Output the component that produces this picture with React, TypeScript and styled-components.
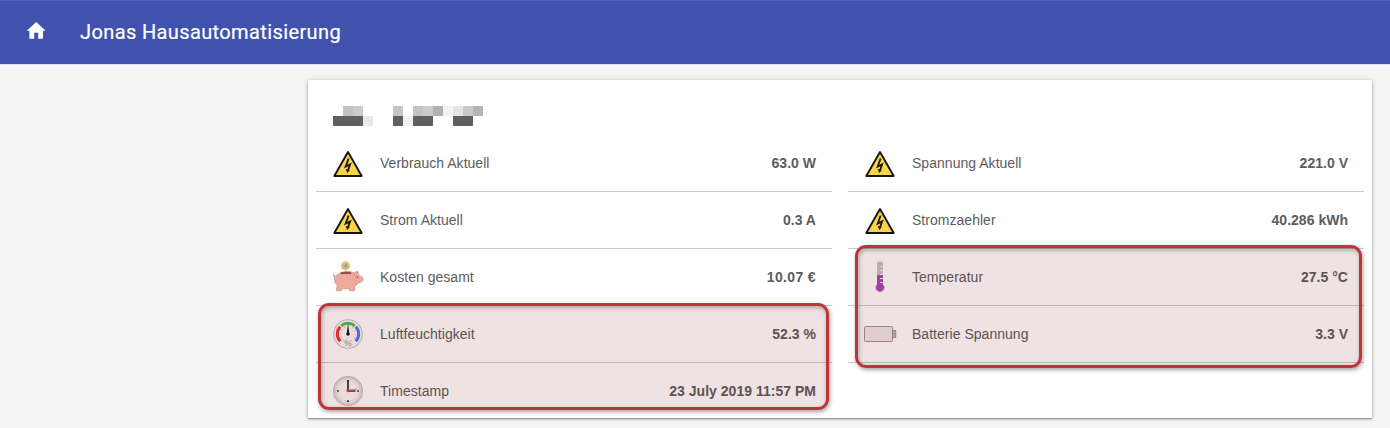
import React from 'react';
import styled, { createGlobalStyle } from 'styled-components';

const GlobalStyle = createGlobalStyle`
  * { box-sizing: border-box; }
  html, body { margin: 0; background: #f4f4f4; }
  body { height: 428px; overflow: hidden; font-family: "Liberation Sans", Arial, sans-serif; }
  svg { display: block; flex: none; }
`;

const Header = styled.header`
  display: flex;
  align-items: center;
  height: 64px;
  padding-left: 24px;
  background: #4152ae;
  border-top: 1px solid #5766b7;
  box-shadow: 0 1px 0 #dadeee;
  color: #fff;
`;

const Title = styled.h1`
  margin: 0 0 2px 32px;
  font: 400 20px/24px Roboto, sans-serif;
  letter-spacing: 0.38px;
  -webkit-text-stroke: 0.2px #fff;
`;

const Card = styled.main`
  position: relative;
  width: 1064px;
  height: 338px;
  margin: 16px 0 0 308px;
  padding: 16px 8px 0;
  background: #fff;
  border-radius: 1px;
  box-shadow: 0 1px 2px rgba(0, 0, 0, 0.45), 0 0 5px rgba(0, 0, 0, 0.14);
`;

const CardHeading = styled.div`
  height: 39px;
  padding: 10px 0 0 17px;
`;

const Columns = styled.div`
  display: grid;
  grid-template-columns: 516px 516px;
  column-gap: 16px;
  height: 283px;
  overflow: hidden;
`;

const Row = styled.div`
  display: flex;
  align-items: center;
  height: 57px;
  padding: 0 16px;
  border-bottom: 1px solid #cbcbcb;
  color: #5c5c5c;
  font-size: 14px;
  line-height: 20px;
  letter-spacing: 0.03px;
`;

const IconSlot = styled.div`
  width: 32px;
  height: 32px;
  margin-right: 16px;
`;

const Value = styled.strong<{ $tracking?: number }>`
  margin-left: auto;
  letter-spacing: ${(p) => p.$tracking ?? 0.02}px;
`;

const Highlight = styled.div<{ $left: number; $top: number; $width: number; $height: number }>`
  position: absolute;
  left: ${(p) => p.$left}px;
  top: ${(p) => p.$top}px;
  width: ${(p) => p.$width}px;
  height: ${(p) => p.$height}px;
  border: 3px solid #bc3537;
  border-radius: 11px;
  background: rgba(118, 14, 14, 0.12);
  box-shadow: 1px 2px 4px rgba(0, 0, 0, 0.36), inset 1px 2px 4px rgba(0, 0, 0, 0.28);
`;

const HomeIcon = () => (
  <svg width="24" height="24" viewBox="0 0 24 24" fill="#fff" transform="translate(0.2 -2.3)">
    <path d="M10 20v-6h4v6h4.800v-8h2.700L12 3.300 2.500 12h2.700v8z" />
  </svg>
);

const Voltage = () => (
  <svg width="32" height="32" viewBox="0 0 32 32">
    <path d="M16 5 29.700 29H2.300Z" fill="#f9d648" stroke="#151515" strokeWidth="1.900" strokeLinejoin="round" />
    <path d="m16.600 11.500-2.900 8 4.400-2.200-2.300 6.700" fill="none" stroke="#1d1a12" strokeWidth="1.900" />
    <path d="m13.700 22 1.500 4 2.600-3Z" fill="#1d1a12" />
  </svg>
);

const PiggyBank = () => (
  <svg width="32" height="32" viewBox="0 0 32 32">
    <circle cx="13.500" cy="4.800" r="4.600" fill="#efc66a" />
    <circle cx="13.500" cy="4.800" r="2.900" fill="#b4b3ae" />
    <path d="M13.800 3.200v3.200" stroke="#898989" />
    <path
      d="M1.500 13c-.6 1.500 0 2.600 1 3-.5 3.500.7 6.800 2.600 8.300l-.8 5.400h5l1-2.200c2 .5 4 .5 6.200 0l1 2.200h5.200v-4.200c1.500-.8 2.400-2.200 3.400-3.500l3.800-1.300c1.700-1 1.600-4-.1-5l-2.600-1.300c-.7-1.200-1.100-2.200-1.200-3.900-1.500-.1-2.600.4-3.800 1.300-4.600-2-13-1.800-16.600 1.700-1.200 1-2.300 1.800-3.100 1.400-.6-.3-.9-.9-1-1.900Z"
      fill="#efaa9e"
      stroke="#ce8c84"
      strokeWidth=".7"
      strokeLinejoin="round"
    />
    <path d="M9 12.300c3-.7 7-.7 10 0" fill="none" stroke="#914c46" strokeWidth="1.900" />
    <path d="M22.300 12.500c-.6 1.900.2 3.100 1.800 3.400M26 21.500c1 .5 1.700.2 2.500-.3" fill="none" stroke="#d58e85" strokeWidth=".8" />
    <circle cx="25.500" cy="16.300" r=".8" fill="#704943" />
  </svg>
);

const Gauge = () => (
  <svg width="32" height="32" viewBox="0 0 32 32">
    <circle cx="16" cy="16" r="14.300" fill="#faf8f8" stroke="#c9c3c3" strokeWidth="1.100" />
    <g fill="none" strokeWidth="3">
      <path d="M8.200 23.300a10.700 10.700 0 0 1 0-14.600" stroke="#fb2929" />
      <path d="M9.200 7.800a10.700 10.700 0 0 1 13.600 0" stroke="#45bd48" />
      <path d="M23.800 8.700a10.700 10.700 0 0 1 0 14.600" stroke="#4279ec" />
      <circle cx="16" cy="16" r="7.500" stroke="#aaa" strokeWidth="1.300" strokeDasharray=".7 3.230" />
    </g>
    <path d="m16 5.500-1.300 10.500h2.600Z" fill="#111" />
    <circle cx="16" cy="16" r="1.700" fill="#111" />
    <g fill="none" stroke="#aaa" strokeWidth=".9">
      <path d="m18.500 22.500-5 5.500" />
      <circle cx="14" cy="24" r="1.300" />
      <circle cx="18" cy="26.500" r="1.300" />
    </g>
  </svg>
);

const Clock = () => (
  <svg width="32" height="32" viewBox="0 0 32 32">
    <circle cx="16" cy="16" r="13.700" fill="#fbf8f8" stroke="#dfdada" strokeWidth="2" />
    <circle cx="16" cy="16" r="14.700" fill="none" stroke="#b5aeae" strokeWidth=".7" />
    <circle cx="16" cy="16" r="12.400" fill="none" stroke="#c5c0c0" strokeWidth=".6" />
    <circle cx="16" cy="16" r="10.500" fill="none" stroke="#c3bebe" strokeWidth="1.400" strokeDasharray=".5 1.700" />
    <path d="M16 5v1.700M16 25.300V27M5 16h1.700M25.300 16H27" stroke="#222" strokeWidth="1.700" />
    <path d="M16 5.500V16h7.500" fill="none" stroke="#30292b" strokeWidth="1.700" />
    <path d="M14 15.200 25 14.200" fill="none" stroke="#fb8585" strokeWidth="1.100" />
    <circle cx="16" cy="16" r="1.300" fill="#d33f49" />
  </svg>
);

const Thermometer = () => (
  <svg width="32" height="32" viewBox="0 0 32 32">
    <path d="M13 15V3q0-2.800 3-2.800T19 3v12" fill="#c4c4c4" />
    <path d="M13 14v9.500a4.200 4.200 0 1 0 6 0V14Z" fill="#a14bb5" />
    <path d="M16 5.500h3M16 9.500h3M16 13.500h3M16 17.500h3M16 21.500h3" stroke="#f3eaf0" strokeWidth="1.100" />
  </svg>
);

const Battery = () => (
  <svg width="32" height="32" viewBox="0 0 32 32" overflow="visible">
    <rect x=".5" y="8.500" width="28" height="15" rx="1" fill="#f0e9e9" stroke="#9d9599" />
    <path d="M28.500 12.500h3.200v7h-3.200Z" fill="#c0b9bd" stroke="#968e92" />
  </svg>
);

const MOSAIC = [
  [1, 0, 1, '#c2c2c2'], [2, 0, 1, '#cbcbcb'], [6, 0, 1, '#c5c5c5'],
  [8, 0, 1, '#c3c3c3'], [9, 0, 1, '#cbcbcb'], [10, 0, 1, '#b1b1b1'],
  [11, 0, 1, '#f2f2f2'], [12, 0, 1, '#e5e5e5'], [13, 0, 1, '#c9c9c9'], [14, 0, 1, '#b5b5b5'],
  [0, 1, 3, '#606060'], [3, 1, 1, '#e8e8e8'], [6, 1, 1, '#606060'],
  [7, 1, 1, '#f0f0f0'], [8, 1, 2, '#606060'], [12, 1, 2, '#606060'],
] as const;

const RedactedName = () => (
  <svg width="150" height="20" shapeRendering="crispEdges">
    {MOSAIC.map(([x, y, w, fill]) => (
      <rect key={`${x}-${y}`} x={x * 10} y={y * 10} width={w * 10} height="10" fill={fill} />
    ))}
  </svg>
);

type Reading = { icon: React.ReactNode; label: string; value: string; tracking?: number };

const LEFT: Reading[] = [
  { icon: <Voltage />, label: 'Verbrauch Aktuell', value: '63.0 W' },
  { icon: <Voltage />, label: 'Strom Aktuell', value: '0.3 A' },
  { icon: <PiggyBank />, label: 'Kosten gesamt', value: '10.07 €', tracking: 0.35 },
  { icon: <Gauge />, label: 'Luftfeuchtigkeit', value: '52.3 %' },
  { icon: <Clock />, label: 'Timestamp', value: '23 July 2019 11:57 PM' },
];

const RIGHT: Reading[] = [
  { icon: <Voltage />, label: 'Spannung Aktuell', value: '221.0 V' },
  { icon: <Voltage />, label: 'Stromzaehler', value: '40.286 kWh' },
  { icon: <Thermometer />, label: 'Temperatur', value: '27.5 °C' },
  { icon: <Battery />, label: 'Batterie Spannung', value: '3.3 V' },
];

const ReadingList = ({ items }: { items: Reading[] }) => (
  <div>
    {items.map((r) => (
      <Row key={r.label}>
        <IconSlot>{r.icon}</IconSlot>
        <span>{r.label}</span>
        <Value $tracking={r.tracking}>{r.value}</Value>
      </Row>
    ))}
  </div>
);

export default function App() {
  return (
    <>
      <GlobalStyle />
      <Header>
        <HomeIcon />
        <Title>Jonas Hausautomatisierung</Title>
      </Header>
      <Card>
        <CardHeading><RedactedName /></CardHeading>
        <Columns>
          <ReadingList items={LEFT} />
          <ReadingList items={RIGHT} />
        </Columns>
        <Highlight $left={10} $top={223} $width={511} $height={107} />
        <Highlight $left={547} $top={165} $width={507} $height={123} />
      </Card>
    </>
  );
}
